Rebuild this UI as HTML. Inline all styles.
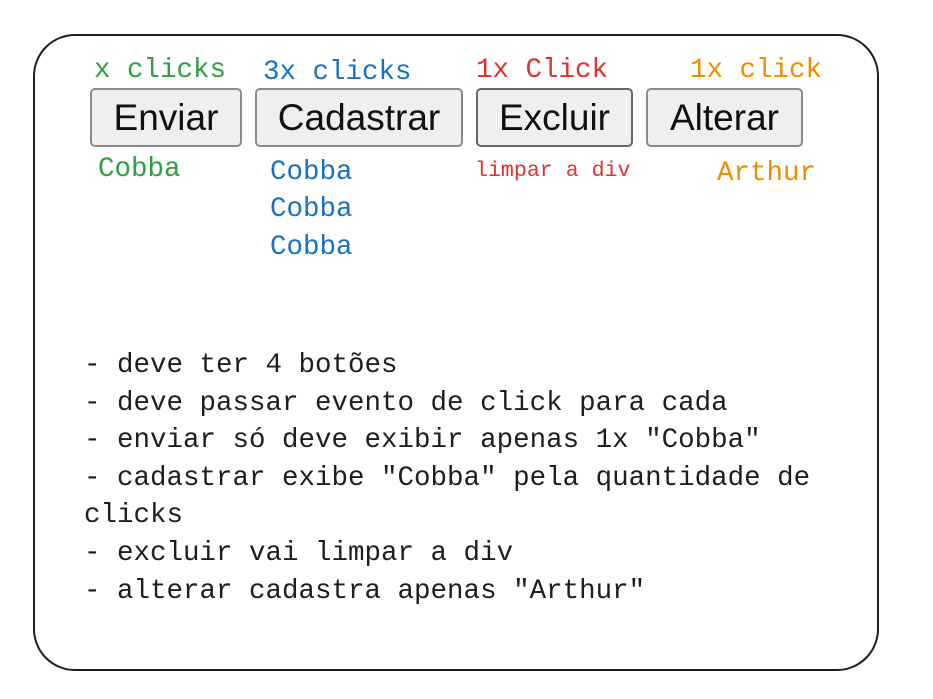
<!DOCTYPE html>
<html><head><meta charset="utf-8"><style>
body{margin:0;width:933px;height:699px;background:#fff;position:relative;overflow:hidden;font-family:"Liberation Mono",monospace;}
.box{position:absolute;left:33px;top:34px;width:842px;height:633px;border:2px solid #1e1e1e;border-radius:42px;}
.t{position:absolute;white-space:pre;font-size:27.5px;line-height:30px;}
.g{color:#2f9e44}.b{color:#1971c2}.r{color:#e03131}.o{color:#f08c00}
.btn{position:absolute;box-sizing:border-box;height:59px;top:88px;background:#efefef;border:2px solid #8a8a8a;border-radius:5px;font-family:"Liberation Sans",Arial,sans-serif;font-size:37px;color:#111;text-align:center;line-height:55px;}
.k{color:#1e1e1e}
</style></head><body>
<div class="box"></div>
<div class="t g" style="left:94px;top:56px">x clicks</div>
<div class="t b" style="left:263px;top:58px">3x clicks</div>
<div class="t r" style="left:476px;top:56px">1x Click</div>
<div class="t o" style="left:690px;top:56px">1x click</div>
<div class="btn" style="left:90px;width:152px">Enviar</div>
<div class="btn" style="left:255px;width:208px">Cadastrar</div>
<div class="btn" style="left:476px;width:157px;border-color:#666">Excluir</div>
<div class="btn" style="left:646px;width:157px">Alterar</div>
<div class="t g" style="left:98px;top:155px">Cobba</div>
<div class="t b" style="left:270px;top:158px">Cobba</div>
<div class="t b" style="left:270px;top:195px">Cobba</div>
<div class="t b" style="left:270px;top:233px">Cobba</div>
<div class="t r" style="left:475px;top:157px;font-size:21.6px;line-height:28px">limpar a div</div>
<div class="t o" style="left:717px;top:159px">Arthur</div>
<div class="t k" style="left:84px;top:347px;line-height:37.6px">- deve ter 4 botões
- deve passar evento de click para cada
- enviar só deve exibir apenas 1x "Cobba"
- cadastrar exibe "Cobba" pela quantidade de
clicks
- excluir vai limpar a div
- alterar cadastra apenas "Arthur"</div>
</body></html>
